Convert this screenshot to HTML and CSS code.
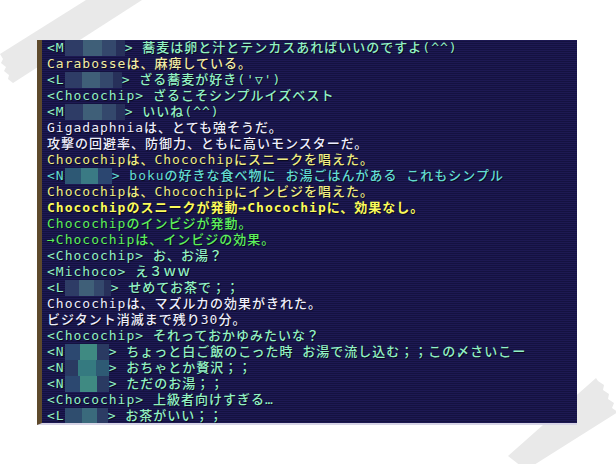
FILE: index.html
```html
<!DOCTYPE html>
<html lang="ja">

<head>
    <meta charset="UTF-8">
    <meta name="viewport" content="width=device-width, initial-scale=1.0">
    <title>Chat log</title>
    <link rel="stylesheet" href="styles.css">
</head>

<body>
    <div class="photo">
        <!-- masking tape on the corners, tucked under the shot -->
        <svg class="tape tape-tl" width="150" height="95" viewBox="0 0 150 95">
            <polygon points="0,54 3,59 1,63 6,67 4,71 9,75 8,79 13,83 142,0 86,0" fill="#e9e9e9" />
        </svg>
        <svg class="tape tape-br" width="110" height="92" viewBox="0 0 110 92">
            <polygon points="0,78 18,92 110,34 104,30 106,25 100,21 101,16 95,12 96,7 90,3 88,0" fill="#e9e9e9" />
        </svg>

        <div class="log">
            <p class="say">&lt;M<i class="mosaic mo-m"></i>&gt; 蕎麦は卵と汁とテンカスあればいいのですよ(^^)</p>
            <p class="status">Carabosseは、麻痺している。</p>
            <p class="say">&lt;L<i class="mosaic mo-l"></i>&gt; ざる蕎麦が好き('▽')</p>
            <p class="say">&lt;Chocochip&gt; ざるこそシンプルイズベスト</p>
            <p class="say">&lt;M<i class="mosaic mo-m"></i>&gt; いいね(^^)</p>
            <p class="system">Gigadaphniaは、とても強そうだ。</p>
            <p class="system">攻撃の回避率、防御力、ともに高いモンスターだ。</p>
            <p class="cast">Chocochipは、Chocochipにスニークを唱えた。</p>
            <p class="party">&lt;N<i class="mosaic mo-boku"></i>&gt; bokuの好きな食べ物に お湯ごはんがある これもシンプル</p>
            <p class="cast">Chocochipは、Chocochipにインビジを唱えた。</p>
            <p class="effect">Chocochipのスニークが発動→Chocochipに、効果なし。</p>
            <p class="buff">Chocochipのインビジが発動。</p>
            <p class="buff">→Chocochipは、インビジの効果。</p>
            <p class="say">&lt;Chocochip&gt; お、お湯？</p>
            <p class="say">&lt;Michoco&gt; え３ｗｗ</p>
            <p class="say">&lt;L<i class="mosaic mo-l2"></i>&gt; せめてお茶で；；</p>
            <p class="system">Chocochipは、マズルカの効果がきれた。</p>
            <p class="system">ビジタント消滅まで残り30分。</p>
            <p class="say">&lt;Chocochip&gt; それっておかゆみたいな？</p>
            <p class="say">&lt;N<i class="mosaic mo-n"></i>&gt; ちょっと白ご飯のこった時 お湯で流し込む；；この〆さいこー</p>
            <p class="say">&lt;N<i class="mosaic mo-n alt"></i>&gt; おちゃとか贅沢；；</p>
            <p class="say">&lt;N<i class="mosaic mo-n"></i>&gt; ただのお湯；；</p>
            <p class="say">&lt;Chocochip&gt; 上級者向けすぎる…</p>
            <p class="say">&lt;L<i class="mosaic mo-l3"></i>&gt; お茶がいい；；</p>
        </div>
    </div>
</body>

</html>
```

FILE: styles.css
```css
body {
    margin: 0;
    background-color: #ffffff;
}

.photo {
    position: relative;
    width: 616px;
    height: 464px;
    padding: 40px 0 0 37px;
    box-sizing: border-box;
}

.log {
    position: relative;
    z-index: 1;
    width: 540px;
    height: 385px;
    box-sizing: border-box;
    padding-left: 5px;
    border-left: 5px solid #5e4a2c;
    border-bottom: 2px solid #d6d4e6;
    background: repeating-linear-gradient(180deg, #1d1953 0 1px, #141240 1px 2px);
    font-family: "DejaVu Sans Mono", "Noto Sans CJK JP", monospace;
    font-size: 13px;
    font-weight: 500;
    letter-spacing: 1px;
    line-height: 16px;
    overflow: hidden;
}

.log p {
    margin: 0;
    height: 16px;
    white-space: nowrap;
    text-shadow: 1px 1px 0 rgba(0, 0, 0, 0.6);
}

.say {
    color: #92f2c4;
}

.party {
    color: #62dcd2;
}

.status {
    color: #f2eca4;
}

.system {
    color: #eeeefc;
}

.cast {
    color: #f0ee84;
}

.effect {
    color: #fbfb5a;
    font-weight: bold;
}

.buff {
    color: #5cf05c;
}

/* blurred player names */
.mosaic {
    display: inline-block;
    height: 16px;
    vertical-align: top;
    background: linear-gradient(90deg, #2e3c66 0 30%, #3f5f78 30% 62%, #34486c 62% 85%, #27305a 85%);
}

.mo-m {
    width: 60px;
}

.mo-l {
    width: 57px;
}

.mo-l2 {
    width: 46px;
}

.mo-l3 {
    width: 43px;
    background: linear-gradient(90deg, #2f4d6e 0 40%, #3a6a7c 40% 75%, #2c3c64 75%);
}

.mo-boku {
    width: 47px;
    background: linear-gradient(90deg, #2d5874 0 35%, #3a7a84 35% 70%, #2b4670 70%);
}

.mo-n {
    width: 44px;
    background: linear-gradient(90deg, #2c4870 0 35%, #3f8a82 35% 72%, #2a3a62 72%);
}

.mo-n.alt {
    background: linear-gradient(90deg, #2a3a62 0 30%, #357a80 30% 70%, #2e5a74 70%);
}

.tape {
    position: absolute;
}

.tape-tl {
    left: 0;
    top: 0;
}

.tape-br {
    left: 508px;
    top: 378px;
}
```
